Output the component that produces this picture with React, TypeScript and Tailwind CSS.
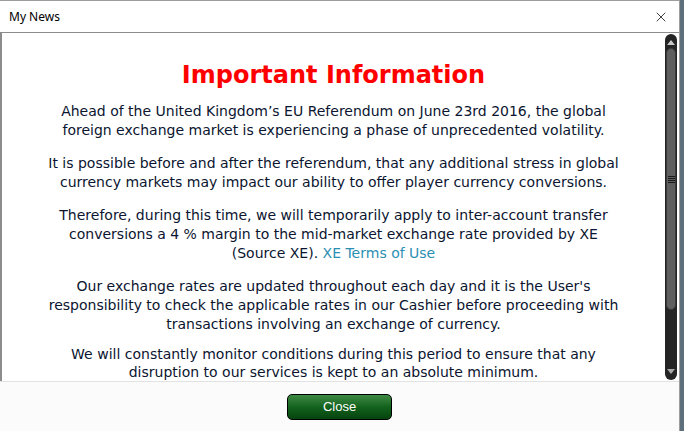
import { X } from "lucide-react";

const paragraphs = [
  "Ahead of the United Kingdom\u2019s EU Referendum on June 23rd 2016, the global foreign exchange market is experiencing a phase of unprecedented volatility.",
  "It is possible before and after the referendum, that any additional stress in global currency markets may impact our ability to offer player currency conversions.",
];

function Scrollbar() {
  return (
    <div className="flex w-[12px] flex-col overflow-hidden rounded-[6px] bg-[#242424] my-[1px] mr-[2px]">
      <div className="flex h-[14px] items-center justify-center pt-[3px]">
        <div className="h-0 w-0 border-x-[4px] border-b-[5px] border-x-transparent border-b-[#c8c8c8]" />
      </div>
      <div className="mx-[1px] flex h-[262px] items-center justify-center rounded-[5px] border border-[#3a3a3a] bg-[#5f5f5f]">
        <div className="flex w-[7px] flex-col gap-[1px]">
          <div className="h-px bg-[#1a1a1a]" />
          <div className="h-px bg-[#1a1a1a]" />
          <div className="h-px bg-[#1a1a1a]" />
          <div className="h-px bg-[#1a1a1a]" />
        </div>
      </div>
      <div className="flex-1" />
      <div className="flex h-[14px] items-center justify-center pb-[3px]">
        <div className="h-0 w-0 border-x-[4px] border-t-[5px] border-x-transparent border-t-[#a8a8a8]" />
      </div>
    </div>
  );
}

export default function App() {
  return (
    <div className="flex h-[431px] w-[684px] bg-[#5d6f7a]">
      <div className="flex w-[680px] flex-col border-r border-t border-[#9c9c9c] bg-white">
        <div className="flex h-[31px] shrink-0 items-center justify-between pl-[9px] pr-[10px]">
          <span className="text-[12px] text-black [font-family:'Noto_Sans',sans-serif]">My News</span>
          <X className="h-[16px] w-[16px] text-[#222]" strokeWidth={1.3} />
        </div>
        <div className="flex h-[349px] shrink-0 border-l-2 border-t border-[#8c8c8c] bg-white">
          <div className="flex-1 overflow-hidden px-[44px] pt-[27px] text-center text-[14px] leading-[19px] text-[#0b1530] [font-family:Verdana,'DejaVu_Sans',sans-serif]">
            <h1 className="mb-[12px] text-[24px] font-bold leading-[30px] text-[#ff0000]">
              Important Information
            </h1>
            {paragraphs.map((p) => (
              <p key={p} className="mb-[14px]">
                {p}
              </p>
            ))}
            <p className="mb-[14px]">
              Therefore, during this time, we will temporarily apply to inter-account transfer conversions a 4 % margin to the mid-market exchange rate provided by XE (Source XE).{" "}
              <a className="text-[#2a8fb2]">XE Terms of Use</a>
            </p>
            <p className="mb-[11px]">
              Our exchange rates are updated throughout each day and it is the User's responsibility to check the applicable rates in our Cashier before proceeding with transactions involving an exchange of currency.
            </p>
            <p className="leading-[18px]">
              We will constantly monitor conditions during this period to ensure that any disruption to our services is kept to an absolute minimum.
            </p>
          </div>
          <Scrollbar />
        </div>
        <div className="flex flex-1 items-center justify-center border-t border-[#e2e2e2] bg-[#fbfbfb]">
          <button className="h-[26px] w-[105px] rounded-[5px] border border-black bg-gradient-to-b from-[#3d8b45] via-[#12621d] to-[#06440e] text-[13px] text-white [font-family:'Liberation_Sans_Narrow','Liberation_Sans',sans-serif]">
            Close
          </button>
        </div>
      </div>
    </div>
  );
}
